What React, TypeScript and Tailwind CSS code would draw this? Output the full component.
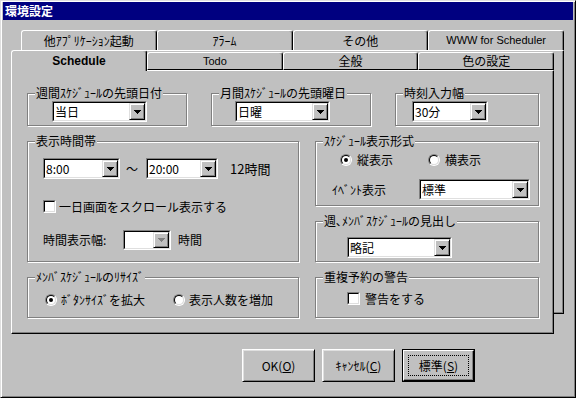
import React from "react";

function Arrow({ disabled }: { disabled?: boolean }) {
  const c = disabled ? "#808080" : "#000";
  return (
    <div className="w-[16px] h-full flex items-center justify-center bg-[#c0c0c0] border border-t-[#dfdfdf] border-l-[#dfdfdf] border-r-black border-b-black shadow-[inset_1px_1px_0_#fff,inset_-1px_-1px_0_#808080]">
      <svg width="7" height="4" viewBox="0 0 7 4" shapeRendering="crispEdges">
        <rect x="0" y="0" width="7" height="1" fill={c} />
        <rect x="1" y="1" width="5" height="1" fill={c} />
        <rect x="2" y="2" width="3" height="1" fill={c} />
        <rect x="3" y="3" width="1" height="1" fill={c} />
      </svg>
    </div>
  );
}

function Combo({ className, value, disabled }: { className: string; value?: string; disabled?: boolean }) {
  return (
    <div className={`flex shrink-0 border border-t-[#808080] border-l-[#808080] border-r-white border-b-white ${className}`}>
      <div className="flex flex-1 border border-t-black border-l-black border-r-[#dfdfdf] border-b-[#dfdfdf] bg-white">
        <div className="flex-1 flex items-center pl-[1px] text-[12px] leading-none whitespace-nowrap">{value}</div>
        <Arrow disabled={disabled} />
      </div>
    </div>
  );
}

function Radio({ checked }: { checked?: boolean }) {
  return (
    <div className="w-[12px] h-[12px] shrink-0 rounded-full border border-t-[#808080] border-l-[#808080] border-r-white border-b-white">
      <div className="w-full h-full rounded-full border border-t-black border-l-black border-r-[#dfdfdf] border-b-[#dfdfdf] bg-white flex items-center justify-center">
        {checked && <div className="w-[4px] h-[4px] rounded-full bg-black" />}
      </div>
    </div>
  );
}

function Check() {
  return (
    <div className="w-[13px] h-[13px] shrink-0 border border-t-[#808080] border-l-[#808080] border-r-white border-b-white">
      <div className="w-full h-full border border-t-black border-l-black border-r-[#dfdfdf] border-b-[#dfdfdf] bg-white" />
    </div>
  );
}

function Group({ title, className, children }: { title: string; className: string; children?: React.ReactNode }) {
  return (
    <div className={`relative shrink-0 border border-[#808080] shadow-[inset_1px_1px_0_#fff,1px_1px_0_#fff] ${className}`}>
      <span className="absolute left-[7px] top-[-8px] px-[1px] bg-[#c0c0c0] text-[12px] leading-[14px] whitespace-nowrap">
        {title}
      </span>
      {children}
    </div>
  );
}

function Tab({ label, className }: { label: React.ReactNode; className: string }) {
  return (
    <div
      className={`flex items-center justify-center bg-[#c0c0c0] border-t border-l border-r border-t-white border-l-white border-r-black rounded-t-[3px] shadow-[inset_-1px_0_0_#808080] text-[12px] leading-none whitespace-nowrap ${className}`}
    >
      {label}
    </div>
  );
}

function Btn({ children, def }: { children: React.ReactNode; def?: boolean }) {
  if (def) {
    return (
      <div className="w-[73px] h-[33px] border border-black">
        <div className="w-full h-full flex items-center justify-center border border-t-white border-l-white border-r-black border-b-black shadow-[inset_-1px_-1px_0_#808080]">
          <div className="w-[61px] h-[21px] flex items-center justify-center border border-dotted border-black text-[12px] leading-none">
            {children}
          </div>
        </div>
      </div>
    );
  }
  return (
    <div className="w-[73px] h-[33px] flex items-center justify-center border border-t-white border-l-white border-r-black border-b-black shadow-[inset_1px_1px_0_#dfdfdf,inset_-1px_-1px_0_#808080] text-[12px] leading-none">
      {children}
    </div>
  );
}

const latin = "font-['Liberation_Sans',Arial,sans-serif]";

export default function App() {
  return (
    <div className="w-[576px] h-[398px] bg-[#c0c0c0] text-black p-[1px] border border-t-[#dfdfdf] border-l-[#dfdfdf] border-r-black border-b-black shadow-[inset_1px_1px_0_#fff,inset_-1px_-1px_0_#808080] font-['Noto_Sans_CJK_JP','Noto_Sans',sans-serif] overflow-hidden">
      <div className="h-[18px] mx-[1px] bg-[#000080] text-white font-bold text-[12px] leading-none flex items-center pl-[2px]">
        環境設定
      </div>

      {/* tab control */}
      <div className="relative w-[553px] h-[304px] ml-[9px] mt-[10px]">
        {/* back row */}
        <div className="absolute left-[10px] top-0 w-[543px] h-[284px] flex flex-col">
          <div className="flex h-[20px]">
            <Tab label="他ｱﾌﾟﾘｹｰｼｮﾝ起動" className="flex-1 h-[20px]" />
            <Tab label="ｱﾗｰﾑ" className="flex-1 h-[20px]" />
            <Tab label="その他" className="flex-1 h-[20px]" />
            <Tab label={<span className={`${latin} text-[11px]`}>WWW for Scheduler</span>} className="flex-1 h-[20px]" />
          </div>
          <div className="flex-1 border border-t-white border-l-white border-r-black border-b-black shadow-[inset_-1px_-1px_0_#808080]" />
        </div>

        {/* front row */}
        <div className="relative pt-[20px] w-[543px]">
          <div className="flex items-end h-[20px]">
            <Tab label={<span className={`${latin} font-bold text-[12px]`}>Schedule</span>} className="relative z-10 w-[136px] h-[21px] mb-[-1px]" />
            <Tab label={<span className={`${latin} text-[11px]`}>Todo</span>} className="flex-1 h-[18px] border-b border-b-black" />
            <Tab label="全般" className="flex-1 h-[18px] border-b border-b-black" />
            <Tab label="色の設定" className="flex-1 h-[18px] border-b border-b-black" />
          </div>
          <div className="h-[264px] bg-[#c0c0c0] border border-t-white border-l-white border-r-black border-b-black shadow-[inset_-1px_-1px_0_#808080] pl-[15px] pt-[22px] flex flex-col gap-[15px]">
            <div className="flex gap-[24px]">
              <Group title="週間ｽｹｼﾞｭｰﾙの先頭日付" className="w-[160px] h-[33px] pl-[24px] pt-[7px]">
                <Combo className="w-[95px] h-[21px]" value="当日" />
              </Group>
              <Group title="月間ｽｹｼﾞｭｰﾙの先頭曜日" className="w-[160px] h-[33px] pl-[23px] pt-[7px]">
                <Combo className="w-[95px] h-[21px]" value="日曜" />
              </Group>
              <Group title="時刻入力幅" className="w-[144px] h-[33px] pl-[16px] pt-[7px]">
                <Combo className="w-[76px] h-[21px]" value="30分" />
              </Group>
            </div>

            <div className="flex gap-[16px]">
              <div className="flex flex-col gap-[15px] w-[272px]">
                <Group title="表示時間帯" className="w-[272px] h-[121px] pl-[15px] pt-[16px]">
                  <div className="flex items-center">
                    <Combo className="w-[77px] h-[21px]" value="8:00" />
                    <span className="w-[12px] ml-[6px] mr-[8px] text-[12px] leading-none">～</span>
                    <Combo className="w-[72px] h-[21px]" value="20:00" />
                    <span className="ml-[12px] text-[13px] leading-none">12時間</span>
                  </div>
                  <div className="flex items-center mt-[21px] gap-[3px]">
                    <Check />
                    <span className="text-[12px] leading-none">一日画面をスクロール表示する</span>
                  </div>
                  <div className="flex items-center mt-[17px]">
                    <span className="w-[80px] text-[12px] leading-none">時間表示幅:</span>
                    <Combo className="w-[48px] h-[20px]" disabled />
                    <span className="ml-[7px] text-[12px] leading-none">時間</span>
                  </div>
                </Group>
                <Group title="ﾒﾝﾊﾞｽｹｼﾞｭｰﾙのﾘｻｲｽﾞ" className="w-[272px] h-[41px] pl-[17px] pt-[16px]">
                  <div className="flex items-center">
                    <Radio checked />
                    <span className="ml-[4px] w-[112px] text-[12px] leading-none">ﾎﾞﾀﾝｻｲｽﾞを拡大</span>
                    <Radio />
                    <span className="ml-[4px] text-[12px] leading-none">表示人数を増加</span>
                  </div>
                </Group>
              </div>

              <div className="flex flex-col gap-[15px] w-[224px]">
                <Group title="ｽｹｼﾞｭｰﾙ表示形式" className="w-[224px] h-[65px] pl-[24px] pt-[12px]">
                  <div className="flex items-center">
                    <Radio checked />
                    <span className="ml-[5px] w-[71px] text-[12px] leading-none">縦表示</span>
                    <Radio />
                    <span className="ml-[5px] text-[12px] leading-none">横表示</span>
                  </div>
                  <div className="flex items-center mt-[13px] ml-[-8px]">
                    <span className="w-[87px] text-[12px] leading-none">ｲﾍﾞﾝﾄ表示</span>
                    <Combo className="w-[111px] h-[21px]" value="標準" />
                  </div>
                </Group>
                <Group title="週､ﾒﾝﾊﾞｽｹｼﾞｭｰﾙの見出し" className="w-[224px] h-[41px] pl-[31px] pt-[15px]">
                  <Combo className="w-[105px] h-[21px]" value="略記" />
                </Group>
                <Group title="重複予約の警告" className="w-[224px] h-[41px] pl-[31px] pt-[14px]">
                  <div className="flex items-center gap-[5px]">
                    <Check />
                    <span className="text-[12px] leading-none">警告をする</span>
                  </div>
                </Group>
              </div>
            </div>
          </div>
        </div>
      </div>

      <div className="flex gap-[7px] ml-[240px] mt-[15px]">
        <Btn>
          OK(<u>O</u>)
        </Btn>
        <Btn>
          ｷｬﾝｾﾙ(<u>C</u>)
        </Btn>
        <Btn def>
          標準(<u>S</u>)
        </Btn>
      </div>
    </div>
  );
}
